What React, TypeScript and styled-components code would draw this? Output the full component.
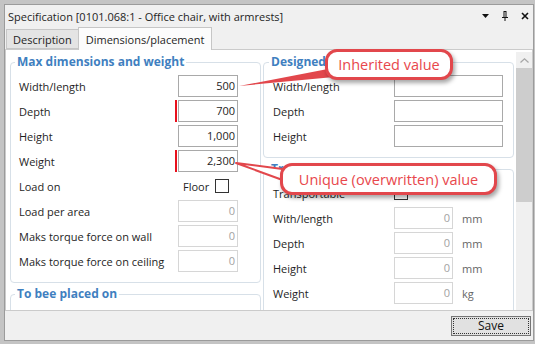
import React from 'react'
import styled, { createGlobalStyle } from 'styled-components'

const GlobalStyle = createGlobalStyle`
  html, body {
    margin: 0;
    padding: 0;
    background: #c4c4c4;
  }
  body {
    font-family: "Open Sans", "Noto Sans", sans-serif;
    font-size: 11px;
    color: #1e1e1e;
  }
  * {
    box-sizing: border-box;
  }
`

const Stage = styled.div`
  position: relative;
  width: 535px;
  height: 344px;
  padding: 4px 0 0 4px;
  overflow: hidden;
`

const Window = styled.div`
  width: 530px;
  height: 337px;
  border: 1px solid #9b9b9b;
  background: #f0f0f0;
  display: flex;
  flex-direction: column;
`

const TitleBar = styled.div`
  height: 22px;
  flex-shrink: 0;
  display: flex;
  align-items: center;
  padding: 0 4px 0 3px;
`

const Title = styled.span`
  flex: 1;
  white-space: nowrap;
`

const TitleIcons = styled.div`
  display: flex;
  align-items: center;
  gap: 13px;
`

const TabStrip = styled.div`
  height: 22px;
  flex-shrink: 0;
  display: flex;
  align-items: flex-end;
  padding-left: 1px;
  position: relative;
  z-index: 1;
`

const Tab = styled.div<{ $active?: boolean }>`
  height: ${(p) => (p.$active ? '23px' : '20px')};
  margin-bottom: ${(p) => (p.$active ? '-1px' : '0')};
  margin-left: ${(p) => (p.$active ? '-1px' : '0')};
  padding: 0 ${(p) => (p.$active ? 7 : 6)}px;
  display: flex;
  align-items: center;
  border: 1px solid #c6c6c6;
  border-bottom: ${(p) => (p.$active ? 'none' : '1px solid #c6c6c6')};
  background: ${(p) => (p.$active ? '#fcfcfc' : '#e4e4e4')};
  white-space: nowrap;
`

const Panel = styled.div`
  height: 262px;
  flex-shrink: 0;
  border: 1px solid #cbcbcb;
  background: #fff;
  display: grid;
  grid-template-columns: 251px 251px 16px;
  column-gap: 2px;
  padding-left: 4px;
  overflow: hidden;
`

const Column = styled.div`
  display: flex;
  flex-direction: column;
  gap: 3px;
  padding-top: 4px;
`

const Group = styled.fieldset<{ $right: number; $left: number }>`
  margin: 0;
  min-width: 0;
  min-height: 40px;
  border: 1px solid #d7e0e8;
  border-radius: 4px;
  padding: 5px ${(p) => p.$right}px 10px ${(p) => p.$left}px;
`

const Legend = styled.legend`
  margin-left: -4px;
  padding: 0 2px;
  font-size: 12px;
  line-height: 16px;
  font-weight: 700;
  color: #3f7fc0;
  white-space: nowrap;
`

const Row = styled.div<{ $cols: string }>`
  display: grid;
  grid-template-columns: ${(p) => p.$cols};
  align-items: center;
  height: 22px;
  margin-bottom: 3px;
  white-space: nowrap;

  &:last-child {
    margin-bottom: 0;
  }
`

const Field = styled.div<{ $disabled?: boolean; $marked?: boolean }>`
  position: relative;
  height: 22px;
  border: 1px solid ${(p) => (p.$disabled ? '#d6d6d6' : '#a9a9a9')};
  background: #fff;
  color: ${(p) => (p.$disabled ? '#a2a2a2' : '#1e1e1e')};
  text-align: right;
  padding-right: 2px;
  line-height: 20px;

  &::before {
    content: '';
    display: ${(p) => (p.$marked ? 'block' : 'none')};
    position: absolute;
    left: -4px;
    top: -1px;
    bottom: -1px;
    width: 2px;
    background: #e8101c;
  }
`

const CheckCell = styled.div<{ $pad?: number }>`
  display: flex;
  align-items: center;
  gap: 6px;
  padding-left: ${(p) => p.$pad ?? 0}px;
`

const Check = styled.span`
  width: 14px;
  height: 14px;
  border: 1px solid #333;
  background: #fff;
`

const Unit = styled.span`
  padding-left: 9px;
  color: #666;
`

const Scrollbar = styled.div`
  margin-top: 2px;
  display: flex;
  flex-direction: column;
  background: #f0f0f0;
`

const ScrollArrow = styled.div`
  height: 16px;
  flex-shrink: 0;
  display: flex;
  align-items: center;
  justify-content: center;
`

const ScrollTrack = styled.div`
  flex: 1;
`

const Thumb = styled.div`
  height: 134px;
  background: #cdcdcd;
`

const BottomBar = styled.div`
  flex: 1;
  display: flex;
  justify-content: flex-end;
  align-items: flex-start;
  padding: 5px 2px 0 0;
`

const SaveButton = styled.button`
  width: 80px;
  height: 20px;
  padding: 1px;
  border: 1px solid #757575;
  background: #e1e1e1;
  font: inherit;
  font-size: 12px;
  color: #111;
  display: flex;
`

const SaveInner = styled.span`
  flex: 1;
  border: 1px dotted #333;
  display: flex;
  align-items: center;
  justify-content: center;
  line-height: 1;
`

const Callout = styled.div<{ $x: number; $y: number; $w: number; $h: number }>`
  position: absolute;
  left: ${(p) => p.$x}px;
  top: ${(p) => p.$y}px;
  width: ${(p) => p.$w}px;
  height: ${(p) => p.$h}px;
  border: 3px solid #e2474c;
  border-radius: 12px;
  background: #fff;
  box-shadow: 2px 3px 4px rgba(0, 0, 0, 0.35);
  color: #e8474c;
  font-size: 14.5px;
  display: flex;
  align-items: center;
  justify-content: center;
  white-space: nowrap;
  z-index: 3;
`

const TailLayer = styled.svg`
  position: absolute;
  left: 0;
  top: 0;
  z-index: 2;
  pointer-events: none;
  overflow: visible;
`

const leftCols = '159px 60px'
const designCols = '121px 109px'
const transCols = '121px 59px auto'

export default function App() {
  return (
    <Stage>
      <GlobalStyle />
      <Window>
        <TitleBar>
          <Title>Specification [0101.068:1 - Office chair, with armrests]</Title>
          <TitleIcons>
            <svg width="7" height="4" viewBox="0 0 7 4">
              <path d="M0 0h7L3.5 4z" fill="#111" />
            </svg>
            <svg width="6" height="10" viewBox="0 0 6 10">
              <path d="M1.5 0h3v6h1.5v1H3.5v3h-1V7H0V6h1.5z M2.5 1v5h1V1z" fill="#111" fillRule="evenodd" />
            </svg>
            <svg width="8" height="8" viewBox="0 0 8 8">
              <path d="M1 1l6 6M7 1L1 7" stroke="#111" strokeWidth="1.6" />
            </svg>
          </TitleIcons>
        </TitleBar>
        <TabStrip>
          <Tab>Description</Tab>
          <Tab $active>Dimensions/placement</Tab>
        </TabStrip>
        <Panel>
          <Column>
            <Group $left={8} $right={21}>
              <Legend>Max dimensions and weight</Legend>
              <Row $cols={leftCols}>
                <span>Width/length</span>
                <Field>500</Field>
              </Row>
              <Row $cols={leftCols}>
                <span>Depth</span>
                <Field $marked>700</Field>
              </Row>
              <Row $cols={leftCols}>
                <span>Height</span>
                <Field>1,000</Field>
              </Row>
              <Row $cols={leftCols}>
                <span>Weight</span>
                <Field $marked>2,300</Field>
              </Row>
              <Row $cols={leftCols}>
                <span>Load on</span>
                <CheckCell $pad={5}>
                  Floor
                  <Check />
                </CheckCell>
              </Row>
              <Row $cols={leftCols}>
                <span>Load per area</span>
                <Field $disabled>0</Field>
              </Row>
              <Row $cols={leftCols}>
                <span>Maks torque force on wall</span>
                <Field $disabled>0</Field>
              </Row>
              <Row $cols={leftCols}>
                <span>Maks torque force on ceiling</span>
                <Field $disabled>0</Field>
              </Row>
            </Group>
            <Group $left={8} $right={21}>
              <Legend>To bee placed on</Legend>
            </Group>
          </Column>
          <Column>
            <Group $left={9} $right={9}>
              <Legend>Designed</Legend>
              <Row $cols={designCols}>
                <span>Width/length</span>
                <Field />
              </Row>
              <Row $cols={designCols}>
                <span>Depth</span>
                <Field />
              </Row>
              <Row $cols={designCols}>
                <span>Height</span>
                <Field />
              </Row>
            </Group>
            <Group $left={9} $right={9}>
              <Legend>Transport dimensions</Legend>
              <Row $cols={transCols}>
                <span>Transportable</span>
                <CheckCell>
                  <Check />
                </CheckCell>
              </Row>
              <Row $cols={transCols}>
                <span>With/length</span>
                <Field $disabled>0</Field>
                <Unit>mm</Unit>
              </Row>
              <Row $cols={transCols}>
                <span>Depth</span>
                <Field $disabled>0</Field>
                <Unit>mm</Unit>
              </Row>
              <Row $cols={transCols}>
                <span>Height</span>
                <Field $disabled>0</Field>
                <Unit>mm</Unit>
              </Row>
              <Row $cols={transCols}>
                <span>Weight</span>
                <Field $disabled>0</Field>
                <Unit>kg</Unit>
              </Row>
            </Group>
          </Column>
          <Scrollbar>
            <ScrollArrow>
              <svg width="9" height="5" viewBox="0 0 9 5">
                <path d="M0.5 4.5L4.5 0.8L8.5 4.5" stroke="#a6a6a6" fill="none" strokeWidth="1.2" />
              </svg>
            </ScrollArrow>
            <Thumb />
            <ScrollTrack />
            <ScrollArrow>
              <svg width="9" height="5" viewBox="0 0 9 5">
                <path d="M0.5 0.5L4.5 4.2L8.5 0.5" stroke="#a6a6a6" fill="none" strokeWidth="1.2" />
              </svg>
            </ScrollArrow>
          </Scrollbar>
        </Panel>
        <BottomBar>
          <SaveButton>
            <SaveInner>Save</SaveInner>
          </SaveButton>
        </BottomBar>
      </Window>

      <TailLayer width="535" height="344">
        <polygon points="239,86 333,68 334,77" fill="#e2474c" />
        <polygon points="236,163 290,170 288,182" fill="#fff" stroke="#e2474c" strokeWidth="2" strokeLinejoin="round" />
      </TailLayer>
      <Callout $x={325} $y={49} $w={128} $h={31}>
        Inherited value
      </Callout>
      <Callout $x={280} $y={163} $w={217} $h={32}>
        Unique (overwritten) value
      </Callout>
    </Stage>
  )
}
